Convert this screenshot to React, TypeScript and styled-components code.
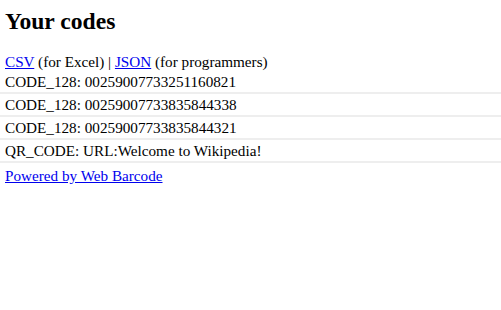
import * as React from "react";
import styled, {createGlobalStyle} from "styled-components";

const GlobalStyle = createGlobalStyle`
  body {
    margin: 0;
    font-family: "Liberation Serif", "Times New Roman", serif;
    font-size: 15.2px;
    color: #000;
    background: #fff;
  }
`

const Page = styled.div`
  display: flex;
  flex-direction: column;
  padding-top: 8px;
`

const Title = styled.h2`
  margin: 0 0 18px 0;
  padding-left: 5px;
  font-size: 23.6px;
  font-weight: bold;
`

const Exports = styled.div`
  padding-left: 5px;
`

const Link = styled.a`
  color: #0000ee;
  text-decoration: underline;
`

const CodeList = styled.div`
  display: flex;
  flex-direction: column;
`

const CodeRow = styled.div`
  padding: 2px 0 1px 5px;
  border-bottom: 2px solid #eeeeee;
`

const Footer = styled.div`
  padding-left: 5px;
  padding-top: 4px;
`

const codes = [
    { type: 'CODE_128', value: '00259007733251160821' },
    { type: 'CODE_128', value: '00259007733835844338' },
    { type: 'CODE_128', value: '00259007733835844321' },
    { type: 'QR_CODE', value: 'URL:Welcome to Wikipedia!' },
]

export default function App() {
    return (
        <>
            <GlobalStyle/>
            <Page>
                <Title>Your codes</Title>
                <Exports>
                    <Link href="#">CSV</Link> (for Excel) | <Link href="#">JSON</Link> (for programmers)
                </Exports>
                <CodeList>
                    {codes.map((c, i) => (
                        <CodeRow key={i}>{c.type}: {c.value}</CodeRow>
                    ))}
                </CodeList>
                <Footer>
                    <Link href="#">Powered by Web Barcode</Link>
                </Footer>
            </Page>
        </>
    );
}
